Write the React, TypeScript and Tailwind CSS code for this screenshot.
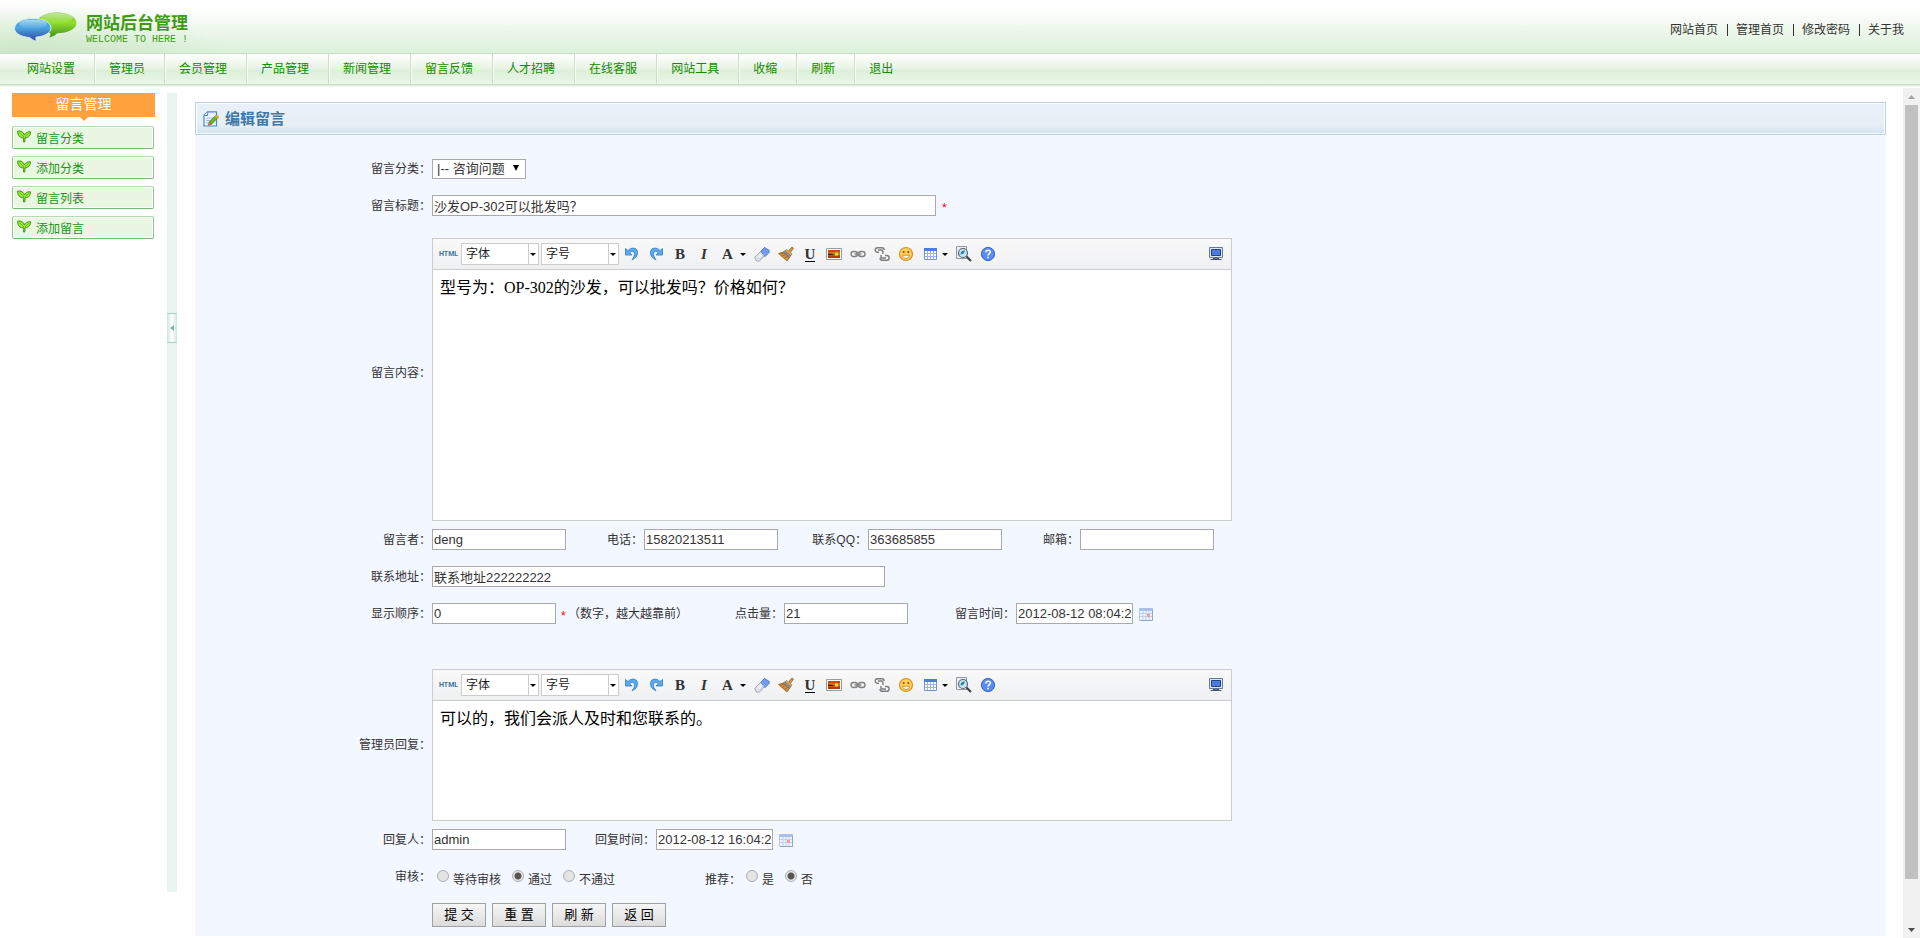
import { ReactNode, useState } from 'react'

const navItems = [
  '网站设置',
  '管理员',
  '会员管理',
  '产品管理',
  '新闻管理',
  '留言反馈',
  '人才招聘',
  '在线客服',
  '网站工具',
  '收缩',
  '刷新',
  '退出',
]

const topLinks = ['网站首页', '管理首页', '修改密码', '关于我']

const sideItems = ['留言分类', '添加分类', '留言列表', '添加留言']

function Logo() {
  return (
    <svg width="64" height="30" viewBox="0 0 64 30" aria-hidden="true">
      <defs>
        <linearGradient id="greenBubble" x1="0" y1="0" x2="0" y2="1">
          <stop offset="0" stopColor="#6cc21a" />
          <stop offset="0.4" stopColor="#93e02c" />
          <stop offset="1" stopColor="#3f8f1c" />
        </linearGradient>
        <linearGradient id="blueBubble" x1="0" y1="0" x2="0" y2="1">
          <stop offset="0" stopColor="#2f9fdc" />
          <stop offset="0.4" stopColor="#4fa6e0" />
          <stop offset="1" stopColor="#2b3fa0" />
        </linearGradient>
        <linearGradient id="gloss" x1="0" y1="0" x2="0" y2="1">
          <stop offset="0" stopColor="#fff" stopOpacity="0.6" />
          <stop offset="1" stopColor="#fff" stopOpacity="0" />
        </linearGradient>
      </defs>
      <path
        d="M43 0.500C32 0.500 23 5 23 11c0 5 6 9 13 10 1 2 0 3.500-1 4.500 4-.5 7-2.500 8-4.200C54 21 62.500 17 62.500 11 62.500 5 54 .5 43 .5z"
        fill="url(#greenBubble)"
      />
      <ellipse cx="43" cy="6" rx="16" ry="5" fill="url(#gloss)" />
      <path
        d="M19 6.500C9 6.500.5 10.500.5 16.500c0 5 7 8.500 15 9 2 1.500 4 3.200 8 4-1.600-1.500-2-3-1.500-4.300C30 24.500 37 21 37 16 37 10.500 29 6.500 19 6.500z"
        fill="url(#blueBubble)"
        stroke="#dcecf5"
        strokeWidth="1"
      />
      <ellipse cx="19" cy="12" rx="14" ry="4.500" fill="url(#gloss)" />
    </svg>
  )
}

function Sprout() {
  return (
    <svg width="14" height="13" viewBox="0 0 14 13" aria-hidden="true">
      <path
        d="M6.800 7.800C3 8.200.6 5.500.6 1.200 4 .4 6.600 2 7.400 5 8.200 2.800 10.500 1.400 13.500 1.800 13.500 5.500 11.500 7.800 8 7.800L7.800 12H6.500z"
        fill="#9be636"
        stroke="#3f9a14"
        strokeWidth="1"
      />
      <path d="M2.500 2.500l4.500 4.500M11.500 3.500L8 6.800" stroke="#5cb51c" strokeWidth="0.800" />
    </svg>
  )
}

function EditNote() {
  return (
    <svg width="16" height="16" viewBox="0 0 16 16" aria-hidden="true">
      <path
        d="M4.500.8H13.500V15H1V4.300z"
        fill="#eef5ff"
        stroke="#4f86d6"
        strokeWidth="1.200"
      />
      <path d="M1 4.500h3.700V.8" fill="#fff" stroke="#4f86d6" />
      <path d="M3 7h7M3 9.500h5M3 12h3" stroke="#9dbdec" />
      <path d="M13.300 4l2.200 2-7 7.200-2.300-2.100z" fill="#6cbf1c" stroke="#2f7a10" strokeWidth="0.800" />
      <path d="M13.300 4l2.200 2-1.500 1.600-2.200-2.100z" fill="#f5a623" />
      <path d="M6.200 11.100l2.300 2.100-3.300 1.200z" fill="#e8892a" stroke="#8a3d10" strokeWidth="0.500" />
    </svg>
  )
}

function CalendarIcon() {
  return (
    <svg width="14" height="13" viewBox="0 0 14 13" aria-hidden="true">
      <path d="M.5.5h13v12H.5z" fill="#eef3fd" stroke="#b9c8e6" />
      <path d="M0 0h14v3H0z" fill="#a9c1ec" />
      <path d="M1 5.500h12M1 8.500h12M4 3v9M7 3v9M10 3v9" stroke="#bfd0f0" />
      <path d="M13.500 2v10.500H1" fill="none" stroke="#8fa6cf" />
      <path d="M8 6h3v3H8z" fill="#f0a090" />
    </svg>
  )
}

function Caret() {
  return (
    <svg width="6" height="3" viewBox="0 0 6 3" aria-hidden="true">
      <path d="M0 0h6L3 3z" fill="#000" />
    </svg>
  )
}

function UndoIcon() {
  return (
    <svg width="16" height="16" viewBox="0 0 16 16" aria-hidden="true">
      <path
        d="M1.500 2.500v6.500h6.500L5.800 6.800C7.500 4.800 10 5 10.400 7.200c.4 2-.4 4-2.400 6.600C12.500 12 14.200 8.500 13.400 5.300 12.500 1.500 7.500.8 4 4.600z"
        fill="#5ba9ea"
        stroke="#2f7fc9"
        strokeWidth="0.800"
      />
    </svg>
  )
}

function RedoIcon() {
  return (
    <svg width="16" height="16" viewBox="0 0 16 16" aria-hidden="true">
      <path
        d="M14.500 2.500v6.500H8l2.200-2.200C8.500 4.800 6 5 5.600 7.200c-.4 2 .4 4 2.400 6.600C3.500 12 1.800 8.500 2.600 5.300 3.500 1.500 8.500.8 12 4.600z"
        fill="#5ba9ea"
        stroke="#2f7fc9"
        strokeWidth="0.800"
      />
    </svg>
  )
}

function EraserIcon() {
  return (
    <svg width="16" height="16" viewBox="0 0 16 16" aria-hidden="true">
      <path d="M.8 11.500L10.500 1.500l4.700 3L5.500 15H2.500z" fill="#e9edf3" stroke="#8d95a3" strokeWidth="0.900" />
      <path d="M6.800 5.300l3.700-3.800 4.700 3v2L11 10.700z" fill="#6f9cf0" stroke="#4a74c9" strokeWidth="0.700" />
      <path d="M2.500 11.500l3 1.500 5-5.300" fill="none" stroke="#bfc6d2" strokeWidth="0.800" />
    </svg>
  )
}

function BrushIcon() {
  return (
    <svg width="16" height="16" viewBox="0 0 16 16" aria-hidden="true">
      <path d="M11 4.500L14 1l1.500 1.200L12.700 6z" fill="#d99a48" stroke="#7c4d16" strokeWidth="0.700" />
      <path d="M8.500 3.500l5.500 4.300-1.200 2L6.800 5z" fill="#e0ac5a" stroke="#7c4d16" strokeWidth="0.500" />
      <path d="M6.800 5l6 4.800-1.300 1.700L5 6z" fill="#8b94a0" stroke="#5a5f66" strokeWidth="0.500" />
      <path d="M5 6L.5 7.500 9 15l2.500-3.500z" fill="#cf8e3c" stroke="#8a5518" strokeWidth="0.700" />
      <path d="M2.500 8.200l3-1M4.500 10l3-1.500M6.500 12l3-1.500" stroke="#8a5518" strokeWidth="0.600" />
    </svg>
  )
}

function ImageIcon() {
  return (
    <svg width="16" height="16" viewBox="0 0 16 16" aria-hidden="true">
      <path d="M.5 2.500h15v11H.5z" fill="#fff" stroke="#9a9a9a" />
      <path d="M2 4h12v8H2z" fill="#e06a12" />
      <path d="M2 4h12v2H2z" fill="#c24e0c" />
      <path d="M2 7.500l4 .5 3 1H2z" fill="#4a1a06" />
      <path d="M2 9.500h12V12H2z" fill="#a8420c" />
      <circle cx="10.500" cy="8" r="1.800" fill="#ffd44a" />
    </svg>
  )
}

function LinkIcon() {
  return (
    <svg width="16" height="16" viewBox="0 0 16 16" fill="none" aria-hidden="true">
      <rect x="1" y="5.500" width="6.500" height="5" rx="2.500" stroke="#808080" strokeWidth="1.400" />
      <rect x="8.500" y="5.500" width="6.500" height="5" rx="2.500" stroke="#808080" strokeWidth="1.400" />
      <path d="M4.500 8h7" stroke="#8c8c8c" strokeWidth="1.600" />
    </svg>
  )
}

function UnlinkIcon() {
  return (
    <svg width="16" height="16" viewBox="0 0 16 16" fill="none" stroke="#7d7d7d" strokeWidth="1.400" aria-hidden="true">
      <path d="M5 6.300H3.500a2.300 2.300 0 010-4.600H8a2.200 2.200 0 012.200 2.200" />
      <path d="M4 4h4l1 1.500v2.500" />
      <path d="M7 9v2.500l1 .5h4" />
      <path d="M11 9.500h1.700a2.300 2.300 0 010 4.800H8a2.300 2.300 0 01-2-2.300" />
    </svg>
  )
}

function SmileIcon() {
  return (
    <svg width="16" height="16" viewBox="0 0 16 16" aria-hidden="true">
      <circle cx="8" cy="8" r="6.500" fill="#ffcf5c" stroke="#dd9020" strokeWidth="1.200" />
      <circle cx="5.700" cy="6" r="1" fill="#8a4a08" />
      <circle cx="10.300" cy="6" r="1" fill="#8a4a08" />
      <path d="M4.500 9.300h7c-.3 2-1.700 3-3.500 3s-3.200-1-3.500-3z" fill="#fff" stroke="#c2700f" strokeWidth="0.700" />
    </svg>
  )
}

function TableIcon() {
  return (
    <svg width="16" height="16" viewBox="0 0 16 16" aria-hidden="true">
      <path d="M2.500 2.500h12v11h-12z" fill="#fff" stroke="#6f94d8" />
      <path d="M2 2h13v3H2z" fill="#4a7fe0" />
      <path d="M3 7.500h11M3 10.500h11M5.500 5v8M8.500 5v8M11.500 5v8" stroke="#9bb6e6" />
    </svg>
  )
}

function PreviewIcon() {
  return (
    <svg width="16" height="16" viewBox="0 0 16 16" aria-hidden="true">
      <path d="M.5.5h10v12H.5z" fill="#eef0f3" stroke="#8e959e" />
      <circle cx="7" cy="7" r="4.500" fill="#c8e8f7" stroke="#5a646e" strokeWidth="1.200" />
      <path d="M4.500 8.500c0-3 2-4.500 4.500-4-1 3-2 4-4.500 4z" fill="#258a9e" />
      <path d="M10.500 10.500l4.500 4.500" stroke="#444" strokeWidth="2.200" />
    </svg>
  )
}

function HelpIcon() {
  return (
    <svg width="16" height="16" viewBox="0 0 16 16" aria-hidden="true">
      <circle cx="8" cy="8" r="6.600" fill="#5a8cf5" stroke="#3563cf" />
      <path
        d="M5.800 6.400c0-3 4.600-2.900 4.500-.2C10.200 7.700 8.100 7.700 8.100 9.500"
        fill="none"
        stroke="#fff"
        strokeWidth="1.500"
      />
      <path d="M7.300 10.800h1.600v1.500H7.300z" fill="#fff" />
    </svg>
  )
}

function ScreenIcon() {
  return (
    <svg width="16" height="16" viewBox="0 0 16 16" aria-hidden="true">
      <path d="M1.500 1.500h13v10h-13z" fill="#dfe6ee" stroke="#6a7890" />
      <path d="M3.500 3.500h9v6h-9z" fill="#4d7be6" stroke="#24418f" />
      <path d="M5 12.500h6M2.500 13.500h11" stroke="#44577f" />
    </svg>
  )
}

interface ToolProps {
  label: string
  children: ReactNode
  caret?: boolean
}

function Tool({ label, children, caret }: ToolProps) {
  return (
    <button
      type="button"
      title={label}
      aria-label={label}
      className={
        caret
          ? 'flex h-4 w-[26px] items-center justify-between'
          : 'flex h-4 w-4 items-center justify-center'
      }
    >
      {children}
      {caret && <Caret />}
    </button>
  )
}

function ToolSelect({ label }: { label: string }) {
  return (
    <div className="relative h-[22px] w-[78px] border border-[#ccc] bg-white">
      <select
        aria-label={label}
        className="block h-5 w-full appearance-none bg-transparent pl-1 text-xs leading-5 text-[#222] outline-none"
      >
        <option>{label}</option>
      </select>
      <span className="pointer-events-none absolute inset-y-0 right-0 flex w-[10px] items-center border-l border-[#ccc] pl-px">
        <Caret />
      </span>
    </div>
  )
}

interface EditorProps {
  id: string
  text: string
  bodyClass: string
}

function Editor({ id, text, bodyClass }: EditorProps) {
  return (
    <div className="w-[800px] border border-[#ccc] bg-white">
      <div className="flex h-[31px] items-center border-b border-[#ccc] bg-linear-to-b from-[#f9f9fa] to-[#eff0f1] pr-[7px] pl-[6px]">
        <button
          type="button"
          className="w-[22px] text-left font-[Roboto,sans-serif] text-[7px] leading-4 font-bold text-[#3d75a5]"
        >
          HTML
        </button>
        <div className="flex gap-[2px]">
          <ToolSelect label="字体" />
          <ToolSelect label="字号" />
        </div>
        <div className="flex flex-1 items-center gap-2 pl-[5px] font-['Liberation_Serif',serif] text-[15px] leading-4 text-[#333]">
          <Tool label="后退">
            <UndoIcon />
          </Tool>
          <Tool label="前进">
            <RedoIcon />
          </Tool>
          <Tool label="粗体">
            <b>B</b>
          </Tool>
          <Tool label="斜体">
            <b>
              <i>I</i>
            </b>
          </Tool>
          <Tool label="文字颜色" caret>
            <b className="pl-[2px]">A</b>
          </Tool>
          <Tool label="删除格式">
            <EraserIcon />
          </Tool>
          <Tool label="一键排版">
            <BrushIcon />
          </Tool>
          <Tool label="下划线">
            <b className="border-b border-black leading-[14px]">U</b>
          </Tool>
          <Tool label="图片">
            <ImageIcon />
          </Tool>
          <Tool label="超级链接">
            <LinkIcon />
          </Tool>
          <Tool label="取消链接">
            <UnlinkIcon />
          </Tool>
          <Tool label="表情">
            <SmileIcon />
          </Tool>
          <Tool label="表格" caret>
            <TableIcon />
          </Tool>
          <Tool label="预览">
            <PreviewIcon />
          </Tool>
          <Tool label="帮助">
            <HelpIcon />
          </Tool>
        </div>
        <Tool label="全屏显示">
          <ScreenIcon />
        </Tool>
      </div>
      <textarea
        id={id}
        defaultValue={text}
        className={`block w-full resize-none px-[7px] pt-[6px] font-['Liberation_Serif','Noto_Sans_CJK_SC',serif] text-base leading-6 text-black outline-none ${bodyClass}`}
      />
    </div>
  )
}

interface RowProps {
  label?: string
  htmlFor?: string
  className?: string
  children: ReactNode
}

function Row({ label, htmlFor, className = 'h-[37px]', children }: RowProps) {
  return (
    <div className={`flex items-center ${className}`}>
      <label htmlFor={htmlFor} className="w-[237px] shrink-0 pr-px text-right">
        {label}
      </label>
      {children}
    </div>
  )
}

interface TextFieldProps {
  id: string
  value: string
  width: string
  label?: string
  labelWidth?: string
}

function TextField({ id, value, width, label, labelWidth }: TextFieldProps) {
  return (
    <>
      {label && (
        <label htmlFor={id} className={`pr-px text-right ${labelWidth}`}>
          {label}
        </label>
      )}
      <input
        id={id}
        type="text"
        defaultValue={value}
        className={`h-[21px] border border-[#a9a9a9] bg-white px-px text-[13px] leading-[15px] outline-none ${width}`}
      />
    </>
  )
}

interface ChoiceProps {
  name: string
  options: string[]
  value: string
}

function Choice({ name, options, value }: ChoiceProps) {
  const [picked, setPicked] = useState(value)

  return (
    <div className="flex gap-[11px] pt-[5px] pl-[5px]">
      {options.map((option) => (
        <label key={option} className="flex gap-1">
          <input
            type="radio"
            name={name}
            checked={picked === option}
            onChange={() => setPicked(option)}
            className="h-3 w-3 appearance-none rounded-full border border-[#adadad] bg-[#e4e4e4] checked:bg-[radial-gradient(circle,#555_0_3px,#e8e8e8_4px)]"
          />
          <span className="pt-[2px]">{option}</span>
        </label>
      ))}
    </div>
  )
}

function DateButton() {
  return (
    <button type="button" aria-label="选择时间" className="ml-[6px] pt-[2px]">
      <CalendarIcon />
    </button>
  )
}

function Header() {
  return (
    <header>
      <div className="flex h-[53px] items-center justify-between bg-[radial-gradient(ellipse_200px_60px_at_30px_60px,#bfe0b8b0,#bfe0b800),linear-gradient(to_bottom,#ffffff_8px,#ecf7ea_32px,#dcf1db)] pr-4 pl-[14px]">
        <div className="flex items-center gap-2">
          <Logo />
          <div className="pt-[7px] text-[#3f9a14]">
            <h1 className="text-[17px] leading-5 font-bold">网站后台管理</h1>
            <p className="font-['Liberation_Mono',monospace] text-[10px] leading-3">
              WELCOME TO HERE !
            </p>
          </div>
        </div>
        <nav className="flex items-center pt-[7px]">
          {topLinks.map((link, i) => (
            <span key={link} className="flex items-center">
              {i > 0 && <span className="mr-2 ml-[9px] h-3 w-px bg-[#333]" />}
              <a href="#">{link}</a>
            </span>
          ))}
        </nav>
      </div>
      <nav className="flex h-8 border-y border-[#c8e0c6] bg-[linear-gradient(to_bottom,#ffffff,#e6f3e3_50%,#dcefd9_54%,#ebf7e8)] pl-[13px] leading-[30px] text-[#168a00] shadow-[0_1px_2px_#d5dfd3]">
        {navItems.map((item) => (
          <a
            key={item}
            href="#"
            className="border-r border-l border-r-[#c8e0c6] border-l-white pr-[19px] pl-[13px] first:border-l-transparent last:border-r-transparent"
          >
            {item}
          </a>
        ))}
      </nav>
    </header>
  )
}

function Sidebar() {
  return (
    <aside className="ml-3 w-[143px] pt-[5px]">
      <h2 className="h-6 bg-[#ffa23e] text-center text-sm leading-[22px] text-white">
        留言管理
      </h2>
      <svg width="8" height="4" viewBox="0 0 8 4" className="mx-auto block" aria-hidden="true">
        <path d="M0 0h8L4 4z" fill="#ffa23e" />
      </svg>
      <ul className="flex flex-col gap-[7px] pt-[5px] pr-px">
        {sideItems.map((item) => (
          <li key={item}>
            <a
              href="#"
              className="flex h-[23px] items-start gap-[5px] rounded-[2px] border border-t-[#b0dcae] border-r-[#8cc98c] border-b-[#74b974] border-l-[#8cc98c] bg-[#e9f6e1] pt-[3px] pl-1 leading-[18px] text-[#219416] inset-shadow-[0_0_0_1px_#fff]"
            >
              <Sprout />
              {item}
            </a>
          </li>
        ))}
      </ul>
    </aside>
  )
}

function MessageForm() {
  return (
    <form className="pt-[15px]" onSubmit={(e) => e.preventDefault()}>
      <Row label="留言分类：" htmlFor="category">
        <div className="relative">
          <select
            id="category"
            className="block h-5 w-[94px] appearance-none border border-[#a9a9a9] bg-white pl-1 text-[13px] leading-[18px] outline-none"
          >
            <option>|-- 咨询问题</option>
          </select>
          <svg
            width="6"
            height="6"
            viewBox="0 0 6 6"
            className="pointer-events-none absolute top-[6px] right-[7px]"
            aria-hidden="true"
          >
            <path d="M0 0h6L3 6z" fill="#000" />
          </svg>
        </div>
      </Row>
      <Row label="留言标题：" htmlFor="title">
        <TextField id="title" value="沙发OP-302可以批发吗？" width="w-[504px]" />
        <span className="pt-1 pl-[6px] text-[#f00]">*</span>
      </Row>
      <Row label="留言内容：" htmlFor="content" className="h-auto">
        <div className="pt-[14px]">
          <Editor
            id="content"
            text="型号为：OP-302的沙发，可以批发吗？价格如何？"
            bodyClass="h-[250px]"
          />
        </div>
      </Row>
      <Row label="留言者：" htmlFor="author">
        <TextField id="author" value="deng" width="w-[134px]" />
        <TextField id="phone" label="电话：" labelWidth="w-[78px]" value="15820213511" width="w-[134px]" />
        <TextField id="qq" label="联系QQ：" labelWidth="w-[90px]" value="363685855" width="w-[134px]" />
        <TextField id="email" label="邮箱：" labelWidth="w-[78px]" value="" width="w-[134px]" />
      </Row>
      <Row label="联系地址：" htmlFor="address">
        <TextField id="address" value="联系地址222222222" width="w-[453px]" />
      </Row>
      <Row label="显示顺序：" htmlFor="order">
        <TextField id="order" value="0" width="w-[124px]" />
        <span className="w-3 pt-1 pl-[5px] text-[#f00]">*</span>
        <span>（数字，越大越靠前）</span>
        <TextField id="hits" label="点击量：" labelWidth="w-24" value="21" width="w-[124px]" />
        <TextField
          id="postedAt"
          label="留言时间："
          labelWidth="w-[108px]"
          value="2012-08-12 08:04:24"
          width="w-[117px]"
        />
        <DateButton />
      </Row>
      <Row label="管理员回复：" htmlFor="reply" className="pt-[37px]">
        <Editor id="reply" text="可以的，我们会派人及时和您联系的。" bodyClass="h-[119px]" />
      </Row>
      <Row label="回复人：" htmlFor="replier">
        <TextField id="replier" value="admin" width="w-[134px]" />
        <TextField
          id="repliedAt"
          label="回复时间："
          labelWidth="w-[90px]"
          value="2012-08-12 16:04:24"
          width="w-[117px]"
        />
        <DateButton />
      </Row>
      <Row label="审核：">
        <Choice name="audit" options={['等待审核', '通过', '不通过']} value="通过" />
        <span className="pt-[6px] pl-[90px]">推荐：</span>
        <Choice name="recommend" options={['是', '否']} value="否" />
      </Row>
      <Row className="h-10">
        <div className="flex gap-[6px]">
          {['提 交', '重 置', '刷 新', '返 回'].map((action) => (
            <button
              key={action}
              type="button"
              className="h-6 w-[54px] border border-[#a0a0a0] bg-linear-to-b from-[#f6f6f6] to-[#dcdcdc] text-[13px] leading-5 text-black"
            >
              {action}
            </button>
          ))}
        </div>
      </Row>
    </form>
  )
}

function Scrollbar() {
  return (
    <div className="flex w-[17px] flex-col items-center bg-[#f1f1f1]" aria-hidden="true">
      <svg width="17" height="17" viewBox="0 0 17 17">
        <path d="M5 11h7L8.500 7z" fill="#a3a3a3" />
      </svg>
      <div className="w-[13px] flex-1 bg-[#c1c1c1]" />
      <svg width="17" height="59" viewBox="0 0 17 59">
        <path d="M5 49h7l-3.500 4z" fill="#505050" />
      </svg>
    </div>
  )
}

export default function App() {
  return (
    <div className="flex min-h-screen flex-col bg-white font-['Liberation_Sans','Noto_Sans_CJK_SC',sans-serif] text-xs leading-4 text-[#333]">
      <Header />
      <div className="flex flex-1 pt-[3px]">
        <div className="flex items-start">
          <Sidebar />
          <div className="mt-[5px] ml-3 h-[799px] w-[10px] bg-[#eaf5f3] pt-[220px]">
            <button
              type="button"
              aria-label="收起侧栏"
              className="flex h-[30px] w-[10px] items-center justify-center border-y border-[#a5d3c8] bg-linear-to-r from-[#cfe6e0] via-white to-[#cfe6e0]"
            >
              <svg width="4" height="6" viewBox="0 0 4 6" aria-hidden="true">
                <path d="M4 0v6L0 3z" fill="#7dbdad" />
              </svg>
            </button>
          </div>
        </div>
        <main className="mt-[14px] mr-[17px] mb-[2px] ml-[18px] min-w-0 flex-1 bg-[#f3f7ff]">
          <div className="flex h-[33px] items-center gap-[6px] border border-[#b5d3e4] bg-linear-to-b from-[#eaf0fa] via-[#e6eff5] via-70% to-[#d3e3ed] pl-[7px] inset-shadow-[0_0_0_1px_#fff]">
            <EditNote />
            <h2 className="text-[15px] leading-5 font-bold text-[#3f78a5]">编辑留言</h2>
          </div>
          <MessageForm />
        </main>
        <Scrollbar />
      </div>
    </div>
  )
}
